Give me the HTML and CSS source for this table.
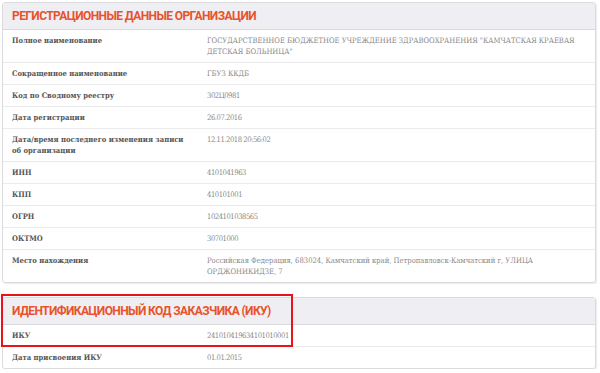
FILE: index.html
```html
<!DOCTYPE html>
<html lang="ru">
<head>
<meta charset="utf-8">
<link rel="stylesheet" href="styles.css">
</head>
<body>
<div class="page">
  <section class="card">
    <h2 class="card-title">РЕГИСТРАЦИОННЫЕ ДАННЫЕ ОРГАНИЗАЦИИ</h2>
    <div class="row"><div class="label">Полное наименование</div><div class="value">ГОСУДАРСТВЕННОЕ БЮДЖЕТНОЕ УЧРЕЖДЕНИЕ ЗДРАВООХРАНЕНИЯ "КАМЧАТСКАЯ КРАЕВАЯ ДЕТСКАЯ БОЛЬНИЦА"</div></div>
    <div class="row"><div class="label">Сокращенное наименование</div><div class="value">ГБУЗ ККДБ</div></div>
    <div class="row"><div class="label">Код по Сводному реестру</div><div class="value num">302Ц0981</div></div>
    <div class="row"><div class="label">Дата регистрации</div><div class="value num">26.07.2016</div></div>
    <div class="row"><div class="label">Дата/время последнего изменения записи об организации</div><div class="value num">12.11.2018 20:56:02</div></div>
    <div class="row"><div class="label">ИНН</div><div class="value num">4101041963</div></div>
    <div class="row"><div class="label">КПП</div><div class="value num">410101001</div></div>
    <div class="row"><div class="label">ОГРН</div><div class="value num">1024101038565</div></div>
    <div class="row"><div class="label">ОКТМО</div><div class="value num">30701000</div></div>
    <div class="row"><div class="label">Место нахождения</div><div class="value">Российская Федерация, 683024, Камчатский край, Петропавловск-Камчатский г, УЛИЦА ОРДЖОНИКИДЗЕ, 7</div></div>
  </section>
  <section class="card card-iku">
    <div class="highlight"></div>
    <h2 class="card-title">ИДЕНТИФИКАЦИОННЫЙ КОД ЗАКАЗЧИКА (ИКУ)</h2>
    <div class="row"><div class="label">ИКУ</div><div class="value num">241010419634101010001</div></div>
    <div class="row"><div class="label">Дата присвоения ИКУ</div><div class="value num">01.01.2015</div></div>
  </section>
</div>
</body>
</html>
```
FILE: styles.css
```css
html, body {
  margin: 0;
  padding: 0;
  background: #ffffff;
}
.page {
  padding: 2px 4px 0 2px;
  display: flex;
  flex-direction: column;
  gap: 14px;
}
.card {
  position: relative;
  border: 1px solid #dcdcdf;
  border-radius: 3px;
  box-shadow: 1px 1px 1px rgba(0,0,0,0.08);
  background: #fff;
}
.card-title {
  margin: 0;
  height: 26px;
  padding: 0 9px;
  display: flex;
  align-items: center;
  background: #efeff3;
  border-bottom: 1px solid #dadade;
  font-family: Roboto, "Open Sans", sans-serif;
  font-weight: 700;
  font-size: 12px;
  letter-spacing: -0.6px;
  color: #e8532c;
}
.row {
  display: grid;
  grid-template-columns: 195px 1fr;
  padding: 5px 9px 5px 9px;
  border-bottom: 1px solid #ebebed;
  font-family: "DejaVu Serif Condensed", "DejaVu Serif", serif;
  font-stretch: condensed;
  font-size: 7.6px;
  line-height: 11px;
}
.row:last-child {
  border-bottom: 0;
}
.label {
  font-weight: 700;
  color: #555555;
  padding-right: 16px;
}
.value {
  color: #8a8a8a;
}
.num {
  letter-spacing: -0.45px;
}
.highlight {
  position: absolute;
  left: -2px;
  top: -4px;
  width: 288px;
  height: 49px;
  border: 2px solid #e8141a;
  pointer-events: none;
}
```
